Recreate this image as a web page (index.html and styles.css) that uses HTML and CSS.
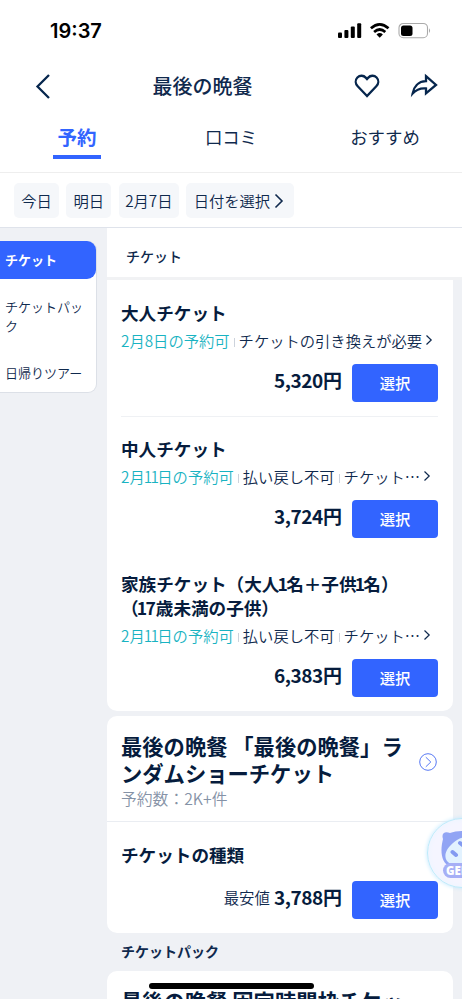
FILE: index.html
```html
<!DOCTYPE html>
<html lang="ja">
<head>
<meta charset="utf-8">
<title>最後の晩餐</title>
<link rel="stylesheet" href="styles.css">
</head>
<body>
<div class="screen">
  <header class="top">
    <div class="status">
      <span class="time">19:37</span>
      <svg class="status-icons" width="96" height="18" viewBox="0 0 96 18">
        <rect x="0" y="10.500" width="4" height="5.500" rx="1"/><rect x="6.400" y="8" width="4" height="8" rx="1"/><rect x="12.800" y="4.600" width="4" height="11.400" rx="1"/><rect x="19.200" y="1.300" width="4" height="14.700" rx="1"/>
        <g fill="none" stroke="#000" stroke-width="2.700"><path d="M32.900 6.300Q41.700-1.500 50.500 6.300"/><path d="M36.100 10Q41.700 5 47.300 10"/></g>
        <path d="M38.500 12.400Q41.700 9.800 44.900 12.400L41.700 15.700Z"/>
        <rect x="61" y="1.500" width="28.500" height="14.200" rx="4.300" fill="none" stroke="#aaa" stroke-width="1.100"/>
        <rect x="63" y="3.400" width="11.500" height="10.600" rx="2.500"/>
        <path d="M91 6.200Q93.200 8.600 91 11Z" fill="#aaa"/>
      </svg>
    </div>
    <div class="nav">
      <svg class="back" width="16" height="26" viewBox="0 0 16 26"><path d="M14 2L2.500 13.500L14 25"/></svg>
      <h1>最後の晩餐</h1>
      <div class="actions">
        <svg width="28" height="26" viewBox="0 0 28 26"><path d="M14 23L4.700 13.300C2.300 10.800 2 7 4.400 4.500C6.900 2 10.600 2.300 12.700 4.600L14 6L15.300 4.600C17.400 2.300 21.100 2 23.600 4.500C26 7 25.700 10.800 23.300 13.300Z"/></svg>
        <svg width="28" height="26" viewBox="0 0 28 26"><path d="M16 3.200L26 12L16 20.300V15.500C10.500 15 5.800 17 2.600 20.600C3.700 14 8 8.400 16 8.200Z"/></svg>
      </div>
    </div>
    <nav class="tabs">
      <span class="tab active">予約</span>
      <span class="tab">口コミ</span>
      <span class="tab">おすすめ</span>
    </nav>
    <div class="chips">
      <span class="chip">今日</span>
      <span class="chip">明日</span>
      <span class="chip date">2月7日</span>
      <span class="chip pick">日付を選択<svg width="10" height="16" viewBox="0 0 10 16"><path d="M1.500 1.500L8 8L1.500 14.500"/></svg></span>
    </div>
  </header>
  <main class="main">
    <aside class="side">
      <div class="menu">
        <div class="menu-item current">チケット</div>
        <div class="menu-item two">チケットパック</div>
        <div class="menu-item">日帰りツアー</div>
      </div>
    </aside>
    <section class="content">
      <h2 class="section-bar">チケット</h2>
      <div class="card first">
        <article class="ticket">
          <h3>大人チケット</h3>
          <div class="info"><span class="avail">2月8日の予約可</span><i></i><span>チケットの引き換えが必要</span><svg width="8" height="12" viewBox="0 0 8 12"><path d="M1.500 1.500L6.200 6L1.500 10.500"/></svg></div>
          <div class="buy"><b>5,320円</b><button>選択</button></div>
        </article>
        <article class="ticket lined">
          <h3>中人チケット</h3>
          <div class="info"><span class="avail">2月<span class="ones">11</span>日の予約可</span><i></i><span>払い戻し不可</span><i></i><span>チケット⋯</span><svg width="8" height="12" viewBox="0 0 8 12"><path d="M1.500 1.500L6.200 6L1.500 10.500"/></svg></div>
          <div class="buy"><b>3,724円</b><button>選択</button></div>
        </article>
        <article class="ticket">
          <h3>家族チケット（大人<span class="one">1</span>名＋子供<span class="one">1</span>名）<br>（<span class="one">1</span>7歳未満の子供）</h3>
          <div class="info"><span class="avail">2月<span class="ones">11</span>日の予約可</span><i></i><span>払い戻し不可</span><i></i><span>チケット⋯</span><svg width="8" height="12" viewBox="0 0 8 12"><path d="M1.500 1.500L6.200 6L1.500 10.500"/></svg></div>
          <div class="buy"><b>6,383円</b><button>選択</button></div>
        </article>
      </div>
      <div class="card show">
        <div class="show-head">
          <div>
            <h2>最後の晩餐 「最後の晩餐」ラ<br>ンダムショーチケット</h2>
            <p>予約数：2K+件</p>
          </div>
          <svg width="18" height="18" viewBox="0 0 18 18"><circle cx="9" cy="9" r="8.300"/><path d="M6.800 4.200L11.800 9L6.800 13.800"/></svg>
        </div>
        <div class="show-body">
          <h3>チケットの種類</h3>
          <div class="buy"><span>最安値</span><b>3,788円</b><button>選択</button></div>
        </div>
      </div>
      <h2 class="pack-title">チケットパック</h2>
      <div class="card last"><h2>最後の晩餐 固定時間枠チケッ</h2></div>
    </section>
  </main>
  <div class="genie">
    <svg width="70" height="70" viewBox="0 0 70 70">
      <path d="M15 20C13 14 17 12 22 14C30 11 43 11 50 17V48H22C13 43 12 32 15 20Z" fill="#91a4f4"/>
      <path d="M19 42C15 36 19 29 25 24C33 17 43 16 48 21V42C38 40 27 51 19 42Z" fill="#e2f2ff"/>
      <path d="M24.500 33L28 36M32 24L36 27" stroke="#839af1" stroke-width="4" stroke-linecap="round"/>
    </svg>
    <span>GENIE</span>
  </div>
  <div class="home-bar"></div>
</div>
</body>
</html>
```

FILE: styles.css
```css
* { box-sizing: border-box; }
body, h1, h2, h3, p { margin: 0; }
body { font-family: "Noto Sans CJK JP", sans-serif; color: #0f294d; background: #fff; }
.screen { position: relative; width: 462px; height: 999px; overflow: hidden; background: #eff1f5; white-space: nowrap; }
svg { flex: none; display: block; }
.top { height: 228px; background: #fff; border-bottom: 1px solid #dfe3eb; }
.status { height: 60px; padding: 22px 27px 0 50px; display: flex; justify-content: space-between; }
.time { font: 600 20px/18px Inter, sans-serif; color: #000; letter-spacing: 0; }
.status-icons { margin-right: 1px; }
.nav { height: 52px; display: flex; align-items: center; padding: 0 24px 0 35px; }
.nav svg { fill: none; stroke: #06264d; stroke-width: 2.300; }
.nav h1 { font-size: 20px; line-height: 30px; font-weight: 500; margin-left: 101.500px; }
.actions { display: flex; gap: 29px; margin-left: auto; }
.tabs { height: 61px; display: flex; border-bottom: 1px solid #eee; }
.tab { width: 154px; font-size: 17.400px; line-height: 49px; text-align: center; }
.tab.active { width: 48px; height: 47px; margin: 0 53px; font-size: 19.500px; font-weight: 700; line-height: 49px; color: #3264ff; border-bottom: 4px solid #3264ff; }
.chips { padding: 10px 14px; display: flex; gap: 7.300px; }
.chip { height: 35px; width: 45px; background: #f5f7fa; border-radius: 5px; font-size: 15.300px; font-weight: 350; line-height: 35px; display: flex; justify-content: center; align-items: center; }
.chip.date { width: 60.500px; }
.chip.pick { width: 108px; gap: 4px; padding-right: 3px; }
.chip svg { fill: none; stroke: #0f294d; stroke-width: 1.600; }
.main { display: flex; }
.side { width: 107px; padding-top: 13px; }
.menu { width: 97px; height: 152px; border: 1px solid #dce0e7; border-left: 0; border-radius: 0 9px 9px 0; background: #fff; font-size: 13px; font-weight: 350; line-height: 19px; }
.menu-item { padding-left: 5px; height: 38px; line-height: 36px; }
.menu-item.current { height: 38px; margin-top: -1px; line-height: 38px; background: #3264ff; color: #fff; font-weight: 700; border-radius: 0 9px 9px 0; }
.menu-item.two { height: 76px; width: 90px; padding-top: 18px; line-height: 19px; white-space: normal; word-break: break-all; }
.content { width: 355px; }
.section-bar { height: 52px; padding-left: 19px; font-size: 14px; line-height: 57px; font-weight: 500; background: #fff; border-bottom: 3px solid #f1f2f4; }
.card { width: 346px; background: #fff; border-radius: 10px; padding: 0 15px 0 14px; }
.card.first { height: 431px; padding-top: 21px; border-radius: 0 0 10px 10px; }
.ticket { height: 136px; }
.ticket h3, .show-body h3 { font-size: 17.600px; line-height: 24px; font-weight: 700; color: #061c3d; }
.ticket.lined { border-top: 1px solid #eff1f4; margin-top: -21px; padding-top: 20px; height: 156px; }
.one { margin: 0 -1.800px; }
.ones { letter-spacing: -1.800px; margin: 0 .3px 0 -.9px; }
.info { height: 24px; margin-top: 3px; display: flex; align-items: center; font-size: 15.300px; font-weight: 350; line-height: 24px; }
.info i { width: 1px; height: 9px; background: #cdd3dc; margin: 4px 4px 0; }
.info svg { fill: none; stroke: #0f294d; stroke-width: 1.200; margin-left: 3px; }
.avail { color: #19b3c2; }
.buy { display: flex; height: 38px; margin-top: 12px; justify-content: flex-end; align-items: center; }
.buy b { font-size: 19px; line-height: 32px; letter-spacing: -.400px; color: #061c3d; margin: 0 10.500px 6px 4px; }
.buy span { font-size: 15.400px; font-weight: 350; line-height: 32px; margin-bottom: 6px; }
button { width: 86px; height: 38px; padding: 0; border: 0; border-radius: 4px; background: #3264ff; color: #fff; font: 500 15.300px/34px "Noto Sans CJK JP", sans-serif; padding-bottom: 2px; }
.show { height: 217px; margin-top: 5px; }
.show-head { height: 106px; margin: 0 -15px 0 -14px; padding: 16px 16px 0 14px; display: flex; justify-content: space-between; border-bottom: 1px solid #eaedf2; }
.show-head h2, .last h2 { font-size: 21.300px; line-height: 27px; font-weight: 700; color: #061c3d; }
.show-head p { font-size: 15.800px; font-weight: 350; line-height: 25px; color: #8592a6; }
.show-head svg { margin-top: 21px; fill: none; stroke: #5879f4; }
.show-body { padding-top: 21px; }
.show-body .buy { margin-top: 14px; }
.pack-title { height: 38px; padding-left: 14px; font-size: 14px; line-height: 37px; font-weight: 700; }
.last { height: 40px; padding-top: 16px; }
.genie { position: absolute; left: 427px; top: 818px; width: 70px; height: 70px; border-radius: 50%; background: radial-gradient(circle, #f5f5ff 60%, #e4f5ff 100%); box-shadow: 0 0 4px #c1e7ff; border: 1px solid #bdebfb; }
.genie span { position: absolute; left: 15px; top: 44px; width: 60px; height: 15px; padding-left: 3px; border-radius: 8px; background: #a6aff6; color: #fff; font: 800 11.500px/15px "Open Sans", sans-serif; }
.home-bar { position: absolute; left: 149px; top: 983px; width: 165px; height: 6px; border-radius: 3px; background: #000; }
```
